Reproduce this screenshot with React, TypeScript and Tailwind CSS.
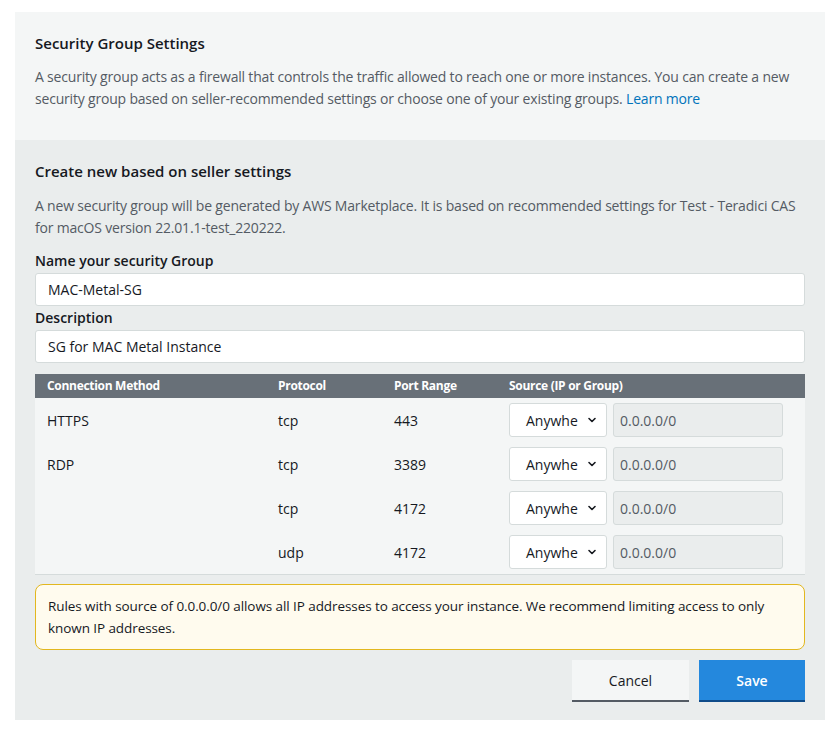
import React from 'react';

const rules = [
  { method: 'HTTPS', protocol: 'tcp', port: '443' },
  { method: 'RDP', protocol: 'tcp', port: '3389' },
  { method: '', protocol: 'tcp', port: '4172' },
  { method: '', protocol: 'udp', port: '4172' },
];

const ChevronDown: React.FC = () => (
  <svg width="10" height="10" viewBox="0 0 10 10" fill="none">
    <path d="M2 3.5 L5 6.5 L8 3.5" stroke="#16191f" strokeWidth="1.6" strokeLinecap="round" strokeLinejoin="round" />
  </svg>
);

const App: React.FC = () => {
  return (
    <div className="min-h-[731px] bg-white pt-3 px-[15px] text-[14px] text-[#16191f]" style={{ fontFamily: '"Open Sans", "Noto Sans", sans-serif' }}>
      <div className="w-[810px]">
        {/* Intro */}
        <div className="bg-[#f4f6f6] px-5 pt-[21px] pb-[30px]">
          <h2 className="text-[15px] font-semibold leading-5 text-[#16191f]">Security Group Settings</h2>
          <p className="mt-[13px] leading-[22px] text-[#545b64] tracking-[-0.19px]">
            A security group acts as a firewall that controls the traffic allowed to reach one or more instances. You can create a new security group based on seller-recommended settings or choose one of your existing groups.{' '}
            <a href="#" className="text-[#0073bb]">Learn more</a>
          </p>
        </div>

        {/* Create new */}
        <div className="bg-[#eaeded] px-5 pt-[21px] pb-[18px]">
          <h3 className="text-[15px] font-semibold leading-5">Create new based on seller settings</h3>
          <p className="mt-[14px] leading-[22px] text-[#545b64] tracking-[-0.19px]">
            A new security group will be generated by AWS Marketplace. It is based on recommended settings for Test - Teradici CAS for macOS version 22.01.1-test_220222.
          </p>

          <label className="mt-[12px] block font-semibold leading-5">Name your security Group</label>
          <input
            readOnly
            value="MAC-Metal-SG"
            className="mt-[2px] block h-[33px] w-full rounded-[3px] border border-[#d5dbdb] bg-white px-3 text-[14px] text-[#16191f] outline-none"
          />
          <label className="mt-[2px] block font-semibold leading-5">Description</label>
          <input
            readOnly
            value="SG for MAC Metal Instance"
            className="mt-[2px] block h-[33px] w-full rounded-[3px] border border-[#d5dbdb] bg-white px-3 text-[14px] text-[#16191f] outline-none"
          />

          {/* Rules table */}
          <div className="mt-[11px] border-b border-[#d5dbdb] bg-[#f4f6f6]">
            <div className="grid h-6 grid-cols-[231px_116px_115px_1fr] items-center bg-[#687078] pl-3 text-[12px] font-bold tracking-[-0.3px] text-white">
              <span>Connection Method</span>
              <span>Protocol</span>
              <span>Port Range</span>
              <span>Source (IP or Group)</span>
            </div>
            {rules.map((r, i) => (
              <div key={i} className="grid h-11 grid-cols-[231px_116px_115px_1fr] items-center pl-3 text-[14px]">
                <span>{r.method}</span>
                <span>{r.protocol}</span>
                <span>{r.port}</span>
                <div className="flex items-center gap-[6px]">
                  <div className="flex h-[34px] w-[98px] items-center justify-between rounded-[3px] border border-[#d5dbdb] bg-white pl-4 pr-[9px]">
                    <span>Anywhe</span>
                    <ChevronDown />
                  </div>
                  <div className="flex h-[34px] w-[170px] items-center rounded-[3px] border border-[#d5dbdb] bg-[#eaeded] px-[6px] text-[#545b64]">
                    0.0.0.0/0
                  </div>
                </div>
              </div>
            ))}
          </div>

          {/* Warning */}
          <div className="mt-[9px] rounded-lg border border-[#e2b71f] bg-[#fffbee] px-3 pt-[10px] pb-[10px] leading-[22px] tracking-[-0.08px] text-[13.5px]">
            Rules with source of 0.0.0.0/0 allows all IP addresses to access your instance. We recommend limiting access to only known IP addresses.
          </div>

          {/* Actions */}
          <div className="mt-[10px] flex justify-end gap-[10px]">
            <button className="h-[42px] w-[117px] border-b-2 border-[#545b64] bg-[#f4f6f6] text-[14px] text-[#16191f]">Cancel</button>
            <button className="h-[42px] w-[106px] border-b-2 border-[#0f4c8a] bg-[#2488dd] text-[14px] font-semibold text-white">Save</button>
          </div>
        </div>
      </div>
    </div>
  );
};

export default App;
